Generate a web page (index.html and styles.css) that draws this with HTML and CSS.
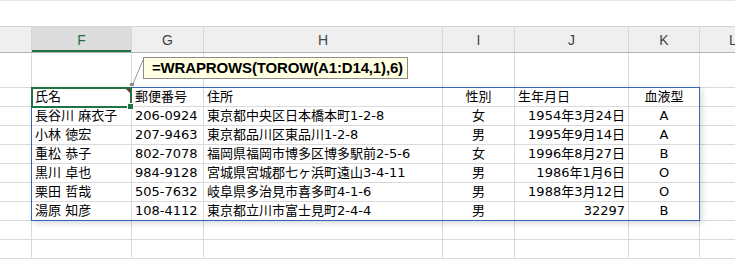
FILE: index.html
```html
<!DOCTYPE html>
<html lang="ja">
<head>
  <meta charset="UTF-8">
  <meta name="viewport" content="width=device-width, initial-scale=1.0">
  <title>WRAPROWS</title>
  <link rel="stylesheet" href="styles.css">
</head>
<body>
  <div class="sheet">
    <div class="topbar"></div>

    <!-- column letters -->
    <div class="colheads">
      <div class="ch"></div>
      <div class="ch on">F</div>
      <div class="ch">G</div>
      <div class="ch">H</div>
      <div class="ch">I</div>
      <div class="ch">J</div>
      <div class="ch">K</div>
      <div class="ch">L</div>
    </div>

    <!-- empty row that holds the formula note -->
    <div class="row tall">
      <div class="c"></div><div class="c"></div><div class="c"></div><div class="c"></div>
      <div class="c"></div><div class="c"></div><div class="c"></div><div class="c"></div>
    </div>

    <div class="block">
      <div class="gutter">
        <div></div><div></div><div></div><div></div><div></div><div></div><div></div>
      </div>

      <div class="table">
        <div class="tr">
          <div class="td sel">氏名<span class="mark"></span><span class="handle"></span></div>
          <div class="td">郵便番号</div>
          <div class="td">住所</div>
          <div class="td mid">性別</div>
          <div class="td">生年月日</div>
          <div class="td mid">血液型</div>
        </div>
        <div class="tr">
          <div class="td">長谷川 麻衣子</div>
          <div class="td">206-0924</div>
          <div class="td">東京都中央区日本橋本町1-2-8</div>
          <div class="td mid">女</div>
          <div class="td num">1954年3月24日</div>
          <div class="td mid">A</div>
        </div>
        <div class="tr">
          <div class="td">小林 徳宏</div>
          <div class="td">207-9463</div>
          <div class="td">東京都品川区東品川1-2-8</div>
          <div class="td mid">男</div>
          <div class="td num">1995年9月14日</div>
          <div class="td mid">A</div>
        </div>
        <div class="tr">
          <div class="td">重松 恭子</div>
          <div class="td">802-7078</div>
          <div class="td">福岡県福岡市博多区博多駅前2-5-6</div>
          <div class="td mid">女</div>
          <div class="td num">1996年8月27日</div>
          <div class="td mid">B</div>
        </div>
        <div class="tr">
          <div class="td">黒川 卓也</div>
          <div class="td">984-9128</div>
          <div class="td">宮城県宮城郡七ヶ浜町遠山3-4-11</div>
          <div class="td mid">男</div>
          <div class="td num">1986年1月6日</div>
          <div class="td mid">O</div>
        </div>
        <div class="tr">
          <div class="td">栗田 哲哉</div>
          <div class="td">505-7632</div>
          <div class="td">岐阜県多治見市喜多町4-1-6</div>
          <div class="td mid">男</div>
          <div class="td num">1988年3月12日</div>
          <div class="td mid">O</div>
        </div>
        <div class="tr">
          <div class="td">湯原 知彦</div>
          <div class="td">108-4112</div>
          <div class="td">東京都立川市富士見町2-4-4</div>
          <div class="td mid">男</div>
          <div class="td num">32297</div>
          <div class="td mid">B</div>
        </div>
      </div>

      <div class="gutter right">
        <div></div><div></div><div></div><div></div><div></div><div></div><div></div>
      </div>
    </div>

    <div class="row">
      <div class="c"></div><div class="c"></div><div class="c"></div><div class="c"></div>
      <div class="c"></div><div class="c"></div><div class="c"></div><div class="c"></div>
    </div>
    <div class="row">
      <div class="c"></div><div class="c"></div><div class="c"></div><div class="c"></div>
      <div class="c"></div><div class="c"></div><div class="c"></div><div class="c"></div>
    </div>

    <!-- note with leader line to F cell -->
    <svg class="leader" width="20" height="34" viewBox="0 0 20 34">
      <line x1="3.5" y1="29" x2="14" y2="4" stroke="#9a9a9a" stroke-width="1"/>
      <rect x="1" y="27" width="4" height="3" fill="#8c8c8c"/>
    </svg>
    <div class="note">=WRAPROWS(TOROW(A1:D14,1),6)</div>
  </div>
</body>
</html>
```

FILE: styles.css
```css
/* Sheet */
body {
  margin: 0;
  overflow: hidden;
  background: #ffffff;
  font-family: "DejaVu Sans", "Noto Sans CJK JP", sans-serif;
  font-size: 13px;
  color: #000000;
}

.sheet {
  position: relative;
  width: 767px;
}

.topbar {
  height: 26px;
  box-sizing: border-box;
  border-top: 1px solid #e6e6e6;
}

/* Shared column grid: E F G H I J K L */
.colheads,
.row {
  display: grid;
  grid-template-columns: 32px 100px 72px 239px 72px 114px 71px 1fr;
}

.colheads {
  height: 27px;
  box-sizing: border-box;
  background: #efefef;
  border-top: 1px solid #d4d4d4;
  border-bottom: 1px solid #b4b4b4;
}

.ch {
  border-right: 1px solid #d6d6d6;
  display: flex;
  align-items: center;
  justify-content: center;
  font-family: "Liberation Sans", Arial, sans-serif;
  font-size: 14px;
  color: #444444;
}

.ch.on {
  background: #dcdcdc;
  color: #217346;
  box-shadow: inset 0 -2px 0 #217346;
}

.row {
  height: 19px;
  box-sizing: border-box;
  border-bottom: 1px solid #dadada;
}

.row.tall {
  height: 34px;
  border-bottom: none;
}

.c {
  border-right: 1px solid #dadada;
}

/* Data block */
.block {
  display: flex;
}

.gutter {
  width: 31px;
  border-top: 1px solid #dadada;
}

.gutter.right {
  flex: 1;
}

.gutter div {
  height: 19px;
  box-sizing: border-box;
  border-bottom: 1px solid #dadada;
}

.table {
  border: 1px solid #3866b6;
  box-shadow: 2px 2px 6px rgba(0, 0, 0, 0.16);
  position: relative;
  background: #ffffff;
}

.tr {
  display: grid;
  grid-template-columns: 100px 72px 239px 72px 114px 70px;
  height: 19px;
  box-sizing: border-box;
  border-bottom: 1px solid #dadada;
}

.tr:last-child {
  height: 18px;
  border-bottom: none;
}

.td {
  border-right: 1px solid #dadada;
  padding: 0 3px;
  line-height: 18px;
  white-space: nowrap;
  overflow: hidden;
}

.td:last-child {
  border-right: none;
}

.td.mid {
  text-align: center;
}

.td.num {
  text-align: right;
}

/* Active cell */
.td.sel {
  position: relative;
  overflow: visible;
}

.td.sel::after {
  content: "";
  position: absolute;
  left: -1px;
  top: -1px;
  right: -1px;
  bottom: -2px;
  border: 2px solid #217346;
}

.handle {
  position: absolute;
  right: -3px;
  bottom: -4px;
  width: 5px;
  height: 5px;
  background: #217346;
  border: 1px solid #ffffff;
  z-index: 2;
}

.mark {
  position: absolute;
  right: 1px;
  top: 1px;
  width: 0;
  height: 0;
  border-top: 4px solid #8b2a1a;
  border-left: 4px solid transparent;
  z-index: 2;
}

/* Formula note */
.note {
  position: absolute;
  left: 143px;
  top: 57px;
  width: 265px;
  height: 22px;
  box-sizing: border-box;
  padding-left: 8px;
  background: #ffffe1;
  border: 1px solid #8c8c8c;
  font-family: "Liberation Sans", Arial, sans-serif;
  font-weight: bold;
  font-size: 15px;
  letter-spacing: -0.15px;
  line-height: 20px;
}

.leader {
  position: absolute;
  left: 129px;
  top: 56px;
  z-index: 3;
}
```
